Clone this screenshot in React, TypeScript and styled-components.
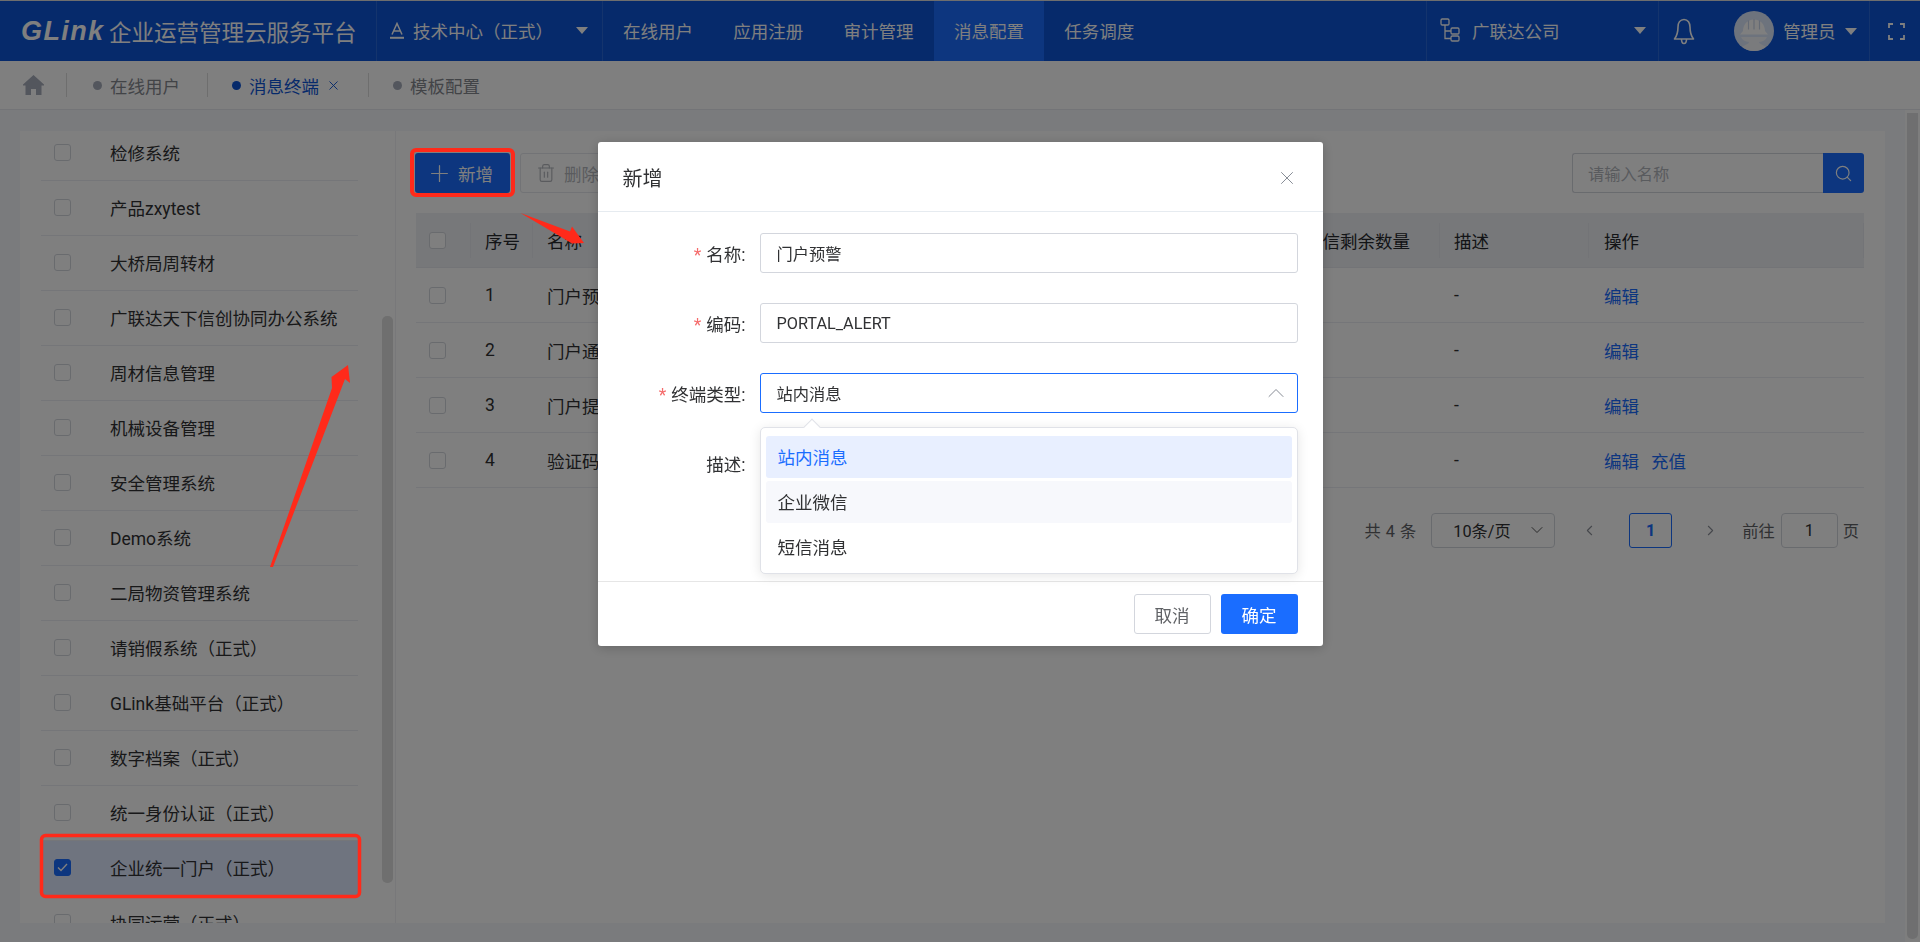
import styled, { createGlobalStyle } from "styled-components";
import { ChevronDown, ChevronLeft, ChevronRight, ChevronUp, Plus, Search, Trash2, X } from "lucide-react";

const FONT = `Roboto, "Noto Sans CJK SC", sans-serif`;
const PRIMARY = "#1a6dff";

const systems = [
  "检修系统",
  "产品zxytest",
  "大桥局周转材",
  "广联达天下信创协同办公系统",
  "周材信息管理",
  "机械设备管理",
  "安全管理系统",
  "Demo系统",
  "二局物资管理系统",
  "请销假系统（正式）",
  "GLink基础平台（正式）",
  "数字档案（正式）",
  "统一身份认证（正式）",
  "企业统一门户（正式）",
  "协同运营（正式）",
];

const rows = [
  { no: 1, name: "门户预警" },
  { no: 2, name: "门户通知" },
  { no: 3, name: "门户提醒" },
  { no: 4, name: "验证码", recharge: true },
];

const navItems = ["在线用户", "应用注册", "审计管理", "消息配置", "任务调度"];

export default function App() {
  return (
    <>
      <GlobalStyle />
      <Page>
        <TopBar>
          <Brand>
            <LogoMark>GLink</LogoMark>
            <BrandTitle>企业运营管理云服务平台</BrandTitle>
          </Brand>
          <ProjectSelect>
            <svg width="16" height="17" viewBox="0 0 16 17" fill="none" stroke="#fff" strokeWidth="1.5">
              <path d="M3 12.5 8 1.5l5 11M4.8 9h6.4" />
              <path d="M1 15.8h14" strokeWidth="2" />
            </svg>
            <span>技术中心（正式）</span>
            <Caret />
          </ProjectSelect>
          <Nav>
            {navItems.map((item) => (
              <NavItem key={item} $active={item === "消息配置"}>
                {item}
              </NavItem>
            ))}
          </Nav>
          <TopRight>
            <OrgSelect>
              <svg width="20" height="24" viewBox="0 0 20 24" fill="none" stroke="#fff" strokeWidth="1.3">
                <rect x="1" y="1" width="8" height="6" rx="1.2" />
                <rect x="11" y="10" width="8" height="6" rx="1.2" />
                <rect x="11" y="18" width="8" height="5" rx="1.2" />
                <path d="M5 7v13.5h6M5 13h6" />
              </svg>
              <span>广联达公司</span>
              <Caret />
            </OrgSelect>
            <BellCell>
              <svg width="22" height="27" viewBox="0 0 22 27" fill="none" stroke="#fff" strokeWidth="1.6" strokeLinejoin="round">
                <path d="M11 1.500c-4 0-6 3.700-6 7.500 0 4.800-.8 8.500-3.500 12h19c-2.700-3.500-3.500-7.200-3.500-12 0-3.800-2-7.500-6-7.500Z" />
                <path d="M8.500 21c0 3 1 4.500 2.500 4.500s2.500-1.500 2.500-4.500" />
              </svg>
            </BellCell>
            <UserCell>
              <svg width="40" height="40" viewBox="0 0 40 40">
                <circle cx="20" cy="20" r="20" fill="#dbe6fb" />
                <path d="M9 20c0-6.500 4.500-11.500 11-11.500S31 13.500 31 20l3 3.500H6Z" fill="#fff" />
                <path d="M14.500 9.500v9M20 8v10.500M25.500 9.500v9" stroke="#c9d4e8" strokeWidth="1.2" />
                <path d="M7 26h26c-1 3-4 4.500-8 5 0 1.500 3.500 3 7 4.500-3 3-7.500 4.500-12 4.500S11 38.500 8 35.500c3.500-1.500 7-3 7-4.500-4-.5-7-2-8-5Z" fill="#f4f6fa" />
              </svg>
              <UserName>管理员</UserName>
              <Caret />
            </UserCell>
            <FullscreenCell>
              <svg width="17" height="17" viewBox="0 0 17 17" fill="none" stroke="#fff" strokeWidth="1.8">
                <path d="M1 5V1h4M12 1h4v4M16 12v4h-4M5 16H1v-4" />
              </svg>
            </FullscreenCell>
          </TopRight>
        </TopBar>

        <TabBar>
          <HomeCell>
            <svg width="21" height="20" viewBox="0 0 21 20" fill="#a6acba">
              <path d="M10.5 0 21 9.5v1H18.500V20h-5.500v-6H8v6H2.500v-9.500H0v-1Z" />
            </svg>
          </HomeCell>
          <Tab>
            <TabDot />
            在线用户
          </Tab>
          <Tab $active>
            <TabDot $active />
            消息终端
            <TabClose>
              <X size={15} strokeWidth={1.5} />
            </TabClose>
          </Tab>
          <Tab>
            <TabDot />
            模板配置
          </Tab>
        </TabBar>

        <Body>
          <Content>
            <Panel>
              <Sidebar>
                <SystemList>
                  {systems.map((name) => {
                    const checked = name === "企业统一门户（正式）";
                    return (
                      <SystemRow key={name} $checked={checked}>
                        <CheckBox $checked={checked}>
                          {checked && (
                            <svg width="11" height="9" viewBox="0 0 11 9" fill="none" stroke="#fff" strokeWidth="1.4">
                              <path d="M1 4.500 4 7.500 10 1" />
                            </svg>
                          )}
                        </CheckBox>
                        {name}
                      </SystemRow>
                    );
                  })}
                </SystemList>
                <SidebarThumb />
              </Sidebar>

              <Workspace>
                <Toolbar>
                  <PrimaryButton>
                    <Plus size={27} strokeWidth={1.1} />
                    新增
                  </PrimaryButton>
                  <GhostButton>
                    <Trash2 size={20} strokeWidth={1.4} />
                    删除
                  </GhostButton>
                  <SearchBox>
                    <SearchInput>请输入名称</SearchInput>
                    <SearchButton>
                      <Search size={19} strokeWidth={1.5} />
                    </SearchButton>
                  </SearchBox>
                </Toolbar>

                <Table>
                  <HeadRow>
                    <HeadCell>
                      <CheckBox />
                    </HeadCell>
                    <HeadCell>序号</HeadCell>
                    <HeadCell>名称</HeadCell>
                    <HeadCell>短信剩余数量</HeadCell>
                    <HeadCell>描述</HeadCell>
                    <HeadCell>操作</HeadCell>
                  </HeadRow>
                  {rows.map((row) => (
                    <DataRow key={row.no}>
                      <DataCell>
                        <CheckBox />
                      </DataCell>
                      <DataCell>{row.no}</DataCell>
                      <DataCell>{row.name}</DataCell>
                      <DataCell />
                      <DataCell>-</DataCell>
                      <DataCell>
                        <LinkText>编辑</LinkText>
                        {row.recharge && <LinkText>充值</LinkText>}
                      </DataCell>
                    </DataRow>
                  ))}
                </Table>

                <Pagination>
                  <Total>共 4 条</Total>
                  <SizeSelect>
                    10条/页
                    <ChevronDown size={20} strokeWidth={1} />
                  </SizeSelect>
                  <PrevButton>
                    <ChevronLeft size={17} strokeWidth={1.5} />
                  </PrevButton>
                  <PageNumber>1</PageNumber>
                  <NextButton>
                    <ChevronRight size={17} strokeWidth={1.5} />
                  </NextButton>
                  <span>前往</span>
                  <JumpInput>1</JumpInput>
                  <JumpUnit>页</JumpUnit>
                </Pagination>
              </Workspace>
            </Panel>
          </Content>
          <PageScroll>
            <PageThumb />
          </PageScroll>
        </Body>
      </Page>

      <Mask>
        <Dialog>
          <DialogHead>
            新增
            <DialogClose>
              <X size={22} strokeWidth={1} />
            </DialogClose>
          </DialogHead>
          <DialogBody>
            <FormRow>
              <FormLabel>
                <Required>*</Required>名称:
              </FormLabel>
              <Field>门户预警</Field>
            </FormRow>
            <FormRow>
              <FormLabel>
                <Required>*</Required>编码:
              </FormLabel>
              <Field>PORTAL_ALERT</Field>
            </FormRow>
            <FormRow>
              <FormLabel>
                <Required>*</Required>终端类型:
              </FormLabel>
              <Field $focused>
                站内消息
                <ChevronUp size={28} strokeWidth={0.8} color="#7d828c" />
                <Dropdown>
                  <DropdownArrow />
                  <Option $selected>站内消息</Option>
                  <Option $hover>企业微信</Option>
                  <Option>短信消息</Option>
                </Dropdown>
              </Field>
            </FormRow>
            <FormRow>
              <FormLabel>描述:</FormLabel>
              <TextArea />
            </FormRow>
          </DialogBody>
          <DialogFoot>
            <CancelButton>取消</CancelButton>
            <ConfirmButton>确定</ConfirmButton>
          </DialogFoot>
        </Dialog>
      </Mask>

      <Annotations viewBox="0 0 1920 942">
        <rect x="412" y="150" width="101" height="45" rx="4" fill="none" stroke="#ff2a1a" strokeWidth="4" />
        <rect x="41.500" y="835.500" width="318" height="61" rx="4" fill="none" stroke="#ff2a1a" strokeWidth="3.500" />
        <polygon points="270,567 332,388 331.500,377 348,365 350,383 345,379 273,567" fill="#ff2a1a" />
        <polygon points="520.500,213 570,231.500 572,226.500 584,243 572,243.500 562,237.500" fill="#ff2a1a" />
      </Annotations>
    </>
  );
}

const GlobalStyle = createGlobalStyle`
  html, body {
    margin: 0;
    height: 100%;
    overflow: hidden;
    font-family: ${FONT};
    font-size: 17.5px;
    color: #303133;
  }
  * {
    box-sizing: border-box;
  }
`;

const Page = styled.div`
  display: flex;
  flex-direction: column;
  height: 942px;
  background: #f5f6fa;
`;

const TopBar = styled.header`
  display: flex;
  height: 61px;
  flex: none;
  color: #fff;
  background: #0c54d6;
  border-top: 1px solid #ddd;
`;

const Brand = styled.div`
  display: flex;
  align-items: center;
  width: 377px;
  padding-left: 21px;
  border-right: 1px solid rgba(255, 255, 255, 0.12);
`;

const LogoMark = styled.span`
  width: 88px;
  font-family: "Liberation Sans", sans-serif;
  font-size: 27px;
  font-style: italic;
  font-weight: 700;
  letter-spacing: 1.4px;
`;

const BrandTitle = styled.span`
  font-size: 22.5px;
  white-space: nowrap;
`;

const Caret = styled.i`
  width: 0;
  height: 0;
  margin-left: auto;
  flex: none;
  border-left: 6px solid transparent;
  border-right: 6px solid transparent;
  border-top: 7px solid #fff;
`;

const ProjectSelect = styled.div`
  display: flex;
  align-items: center;
  gap: 8px;
  width: 226px;
  padding: 0 14px 2px 12px;
  border-right: 1px solid rgba(255, 255, 255, 0.12);
  white-space: nowrap;
`;

const Nav = styled.nav`
  display: flex;
`;

const NavItem = styled.div<{ $active?: boolean }>`
  display: flex;
  align-items: center;
  width: 110.300px;
  padding: 0 0 2px 20px;
  white-space: nowrap;
  background: ${(p) => (p.$active ? PRIMARY : "transparent")};
`;

const TopRight = styled.div`
  display: flex;
  margin-left: auto;
`;

const OrgSelect = styled.div`
  display: flex;
  align-items: center;
  gap: 12px;
  width: 233px;
  padding: 0 12px 2px 13px;
  border-left: 1px solid rgba(255, 255, 255, 0.12);
  border-right: 1px solid rgba(255, 255, 255, 0.12);
`;

const BellCell = styled.div`
  display: flex;
  align-items: center;
  padding: 0 39px 0 14px;
`;

const UserCell = styled.div`
  display: flex;
  align-items: center;
  gap: 9px;
  width: 135px;
  padding-right: 12px;
`;

const UserName = styled.span`
  padding-bottom: 2px;
  white-space: nowrap;
`;

const FullscreenCell = styled.div`
  display: flex;
  align-items: center;
  width: 51px;
  padding-left: 18px;
  border-left: 1px solid rgba(255, 255, 255, 0.12);
`;

const TabBar = styled.div`
  display: flex;
  align-items: center;
  height: 49px;
  flex: none;
  background: #fff;
  border-bottom: 1px solid #e6e8ee;
`;

const HomeCell = styled.div`
  display: flex;
  align-items: center;
  width: 67px;
  height: 24px;
  padding-left: 23px;
  border-right: 1px solid #ddd;
`;

const Tab = styled.div<{ $active?: boolean }>`
  display: flex;
  align-items: center;
  height: 24px;
  padding: 0 27px 0 26px;
  color: ${(p) => (p.$active ? "#0c54d6" : "#85888f")};
  border-right: 1px solid #ddd;

  & + & {
    padding: 0 27px 0 24px;
  }

  &:last-child {
    padding-left: 17px;
    border-right: 0;
  }
`;

const TabDot = styled.i<{ $active?: boolean }>`
  width: 9px;
  height: 9px;
  margin-right: 8px;
  border-radius: 50%;
  background: ${(p) => (p.$active ? "#0c54d6" : "#a6acba")};
`;

const TabClose = styled.span`
  display: flex;
  margin-left: 7px;
`;

const Body = styled.div`
  display: flex;
  flex: 1;
  min-height: 0;
`;

const Content = styled.main`
  flex: 1;
  min-width: 0;
  padding: 21px 20px 19px;
`;

const PageScroll = styled.div`
  width: 15px;
  flex: none;
  padding: 3px 2px 3px 2px;
  background: #fdfdfd;
`;

const PageThumb = styled.div`
  height: 100%;
  border-radius: 0 0 5px 5px;
  background: #dedfe1;
`;

const Panel = styled.div`
  display: flex;
  height: 100%;
  background: #fff;
`;

const Sidebar = styled.aside`
  position: relative;
  width: 376px;
  flex: none;
  overflow: hidden;
  border-right: 1px solid #f0f1f4;
`;

const SystemList = styled.div`
  margin: -5px 37px 0 21px;
`;

const SystemRow = styled.div<{ $checked?: boolean }>`
  display: flex;
  align-items: center;
  gap: 39px;
  height: 55px;
  padding: 0 0 2px 13px;
  white-space: nowrap;
  border-bottom: 1px solid #ebedf2;
  background: ${(p) => (p.$checked ? "#dfe8ff" : "transparent")};
`;

const CheckBox = styled.span<{ $checked?: boolean }>`
  display: flex;
  align-items: center;
  justify-content: center;
  width: 17px;
  height: 17px;
  flex: none;
  border-radius: 3px;
  border: 1px solid ${(p) => (p.$checked ? PRIMARY : "#d3d6dd")};
  background: ${(p) => (p.$checked ? PRIMARY : "#fff")};
`;

const SidebarThumb = styled.div`
  position: absolute;
  top: 185px;
  left: 362px;
  width: 11px;
  height: 567px;
  border-radius: 5px;
  background: #dedede;
`;

const Workspace = styled.section`
  flex: 1;
  min-width: 0;
  padding: 22px 21px 0 19px;
`;

const Toolbar = styled.div`
  display: flex;
  align-items: center;
  height: 40px;
`;

const PrimaryButton = styled.button`
  display: flex;
  align-items: center;
  gap: 5px;
  width: 95px;
  height: 40px;
  padding: 0 0 0 11px;
  color: #fff;
  font: inherit;
  background: ${PRIMARY};
  border: 0;
  border-radius: 3px;
`;

const GhostButton = styled.button`
  display: flex;
  align-items: center;
  justify-content: center;
  gap: 8px;
  width: 95px;
  height: 40px;
  margin-left: 10px;
  padding: 0;
  color: #b4b7bd;
  font: inherit;
  background: #fff;
  border: 1px solid #e4e6ec;
  border-radius: 3px;
`;

const SearchBox = styled.div`
  display: flex;
  margin-left: auto;
`;

const SearchInput = styled.div`
  display: flex;
  align-items: center;
  width: 251px;
  height: 40px;
  padding-left: 15px;
  color: #b3b6bd;
  font-size: 16.250px;
  border: 1px solid #d3d6dd;
  border-right: 0;
  border-radius: 3px 0 0 3px;
`;

const SearchButton = styled.div`
  display: flex;
  align-items: center;
  justify-content: center;
  width: 41px;
  height: 40px;
  color: #fff;
  background: ${PRIMARY};
  border-radius: 0 3px 3px 0;
`;

const Table = styled.div`
  margin: 20px 0 0 1px;
`;

const HeadRow = styled.div`
  display: grid;
  grid-template-columns: 55px 62px 758px 149px 149px 275px;
  align-items: center;
  height: 55px;
  background: #eef0f5;
  border-bottom: 1px solid #e6e8ee;
`;

const HeadCell = styled.div`
  display: flex;
  align-items: center;
  height: 35px;
  padding-left: 14px;
  white-space: nowrap;
  color: #26282c;
  border-right: 1px solid #e6e8ee;

  &:first-child {
    padding-left: 13px;
  }

  &:last-child {
    padding-left: 15px;
  }
`;

const DataRow = styled.div`
  display: grid;
  grid-template-columns: 55px 62px 758px 149px 149px 275px;
  align-items: center;
  height: 55px;
  border-bottom: 1px solid #ebedf2;
`;

const DataCell = styled.div`
  display: flex;
  gap: 12px;
  align-items: center;
  padding-left: 14px;
  white-space: nowrap;

  &:first-child {
    padding-left: 13px;
  }

  &:last-child {
    padding-left: 15px;
  }
`;

const LinkText = styled.span`
  color: ${PRIMARY};
`;

const Pagination = styled.div`
  display: flex;
  align-items: center;
  justify-content: flex-end;
  height: 36px;
  margin-top: 24px;
  padding-right: 5px;
  color: #606266;
  font-size: 16.250px;
`;

const Total = styled.span`
  margin-right: 15px;
  word-spacing: 1px;
`;

const SizeSelect = styled.div`
  display: flex;
  align-items: center;
  justify-content: space-between;
  width: 124px;
  height: 35px;
  padding: 0 7px 0 21px;
  color: #303133;
  border: 1px solid #d3d6dd;
  border-radius: 4px;
`;

const PrevButton = styled.span`
  display: flex;
  justify-content: center;
  width: 74px;
  padding-right: 5px;
  color: #8b8f98;
`;

const PageNumber = styled.div`
  display: flex;
  align-items: center;
  justify-content: center;
  width: 43px;
  height: 35px;
  color: ${PRIMARY};
  font-weight: 700;
  border: 1px solid ${PRIMARY};
  border-radius: 3px;
`;

const NextButton = styled.span`
  display: flex;
  justify-content: center;
  width: 70px;
  padding-left: 6px;
  color: #8b8f98;
`;

const JumpInput = styled.div`
  display: flex;
  align-items: center;
  justify-content: center;
  width: 57px;
  height: 35px;
  margin-left: 6px;
  color: #303133;
  border: 1px solid #d3d6dd;
  border-radius: 4px;
`;

const JumpUnit = styled.span`
  margin-left: 5px;
`;

const Mask = styled.div`
  position: fixed;
  inset: 0;
  display: flex;
  justify-content: center;
  padding-top: 142px;
  background: rgba(0, 0, 0, 0.5);
`;

const Dialog = styled.div`
  width: 725px;
  height: 504px;
  background: #fff;
  border-radius: 3px;
  box-shadow: 0 2px 12px rgba(0, 0, 0, 0.2);
`;

const DialogHead = styled.div`
  display: flex;
  align-items: center;
  justify-content: space-between;
  height: 70px;
  padding: 2px 25px 0 25px;
  color: #303133;
  font-size: 20px;
  border-bottom: 1px solid #e6ebf0;
`;

const DialogClose = styled.span`
  display: flex;
  color: #7d828c;
`;

const DialogBody = styled.div`
  height: 369px;
  padding: 21px 25px 0 0;
`;

const FormRow = styled.div`
  display: flex;
  align-items: center;
  gap: 14px;
  margin-bottom: 30px;
  height: 40px;
`;

const FormLabel = styled.label`
  width: 148px;
  flex: none;
  text-align: right;
  color: #303133;
`;

const Required = styled.span`
  margin-right: 5px;
  color: #f56c6c;
`;

const Field = styled.div<{ $focused?: boolean }>`
  position: relative;
  display: flex;
  align-items: center;
  justify-content: space-between;
  flex: 1;
  height: 40px;
  padding: 0 7px 0 16px;
  font-size: 16.250px;
  border: 1px solid ${(p) => (p.$focused ? PRIMARY : "#d3d6dd")};
  border-radius: 3px;
`;

const TextArea = styled.div`
  flex: 1;
  height: 100px;
  align-self: flex-start;
  border: 1px solid #d3d6dd;
  border-radius: 3px;
`;

const Dropdown = styled.div`
  position: absolute;
  top: 53px;
  left: -1px;
  right: -1px;
  z-index: 2;
  padding: 8px 5px 2px;
  font-size: 17.500px;
  background: #fff;
  border: 1px solid #e0e2e8;
  border-radius: 5px;
  box-shadow: 0 2px 12px rgba(0, 0, 0, 0.1);
`;

const DropdownArrow = styled.i`
  position: absolute;
  top: -7px;
  left: 45px;
  width: 12px;
  height: 12px;
  background: #fff;
  border-top: 1px solid #e0e2e8;
  border-left: 1px solid #e0e2e8;
  transform: rotate(45deg);
`;

const Option = styled.div<{ $selected?: boolean; $hover?: boolean }>`
  position: relative;
  display: flex;
  align-items: center;
  height: 42px;
  margin-bottom: 3px;
  padding: 0 0 2px 12px;
  border-radius: 3px;
  color: ${(p) => (p.$selected ? PRIMARY : "#303133")};
  background: ${(p) => (p.$selected ? "#e8efff" : p.$hover ? "#f7f8fc" : "transparent")};
`;

const DialogFoot = styled.div`
  display: flex;
  justify-content: flex-end;
  gap: 10px;
  height: 65px;
  padding: 12px 25px 0 0;
  border-top: 1px solid #e6e6e6;
`;

const CancelButton = styled.button`
  width: 77px;
  height: 40px;
  padding: 0;
  color: #606266;
  font: inherit;
  background: #fff;
  border: 1px solid #d3d6dd;
  border-radius: 3px;
`;

const ConfirmButton = styled.button`
  width: 77px;
  height: 40px;
  padding: 0;
  color: #fff;
  font: inherit;
  background: ${PRIMARY};
  border: 0;
  border-radius: 3px;
`;

const Annotations = styled.svg`
  position: fixed;
  left: 0;
  top: 0;
  width: 1920px;
  height: 942px;
  pointer-events: none;
`;
